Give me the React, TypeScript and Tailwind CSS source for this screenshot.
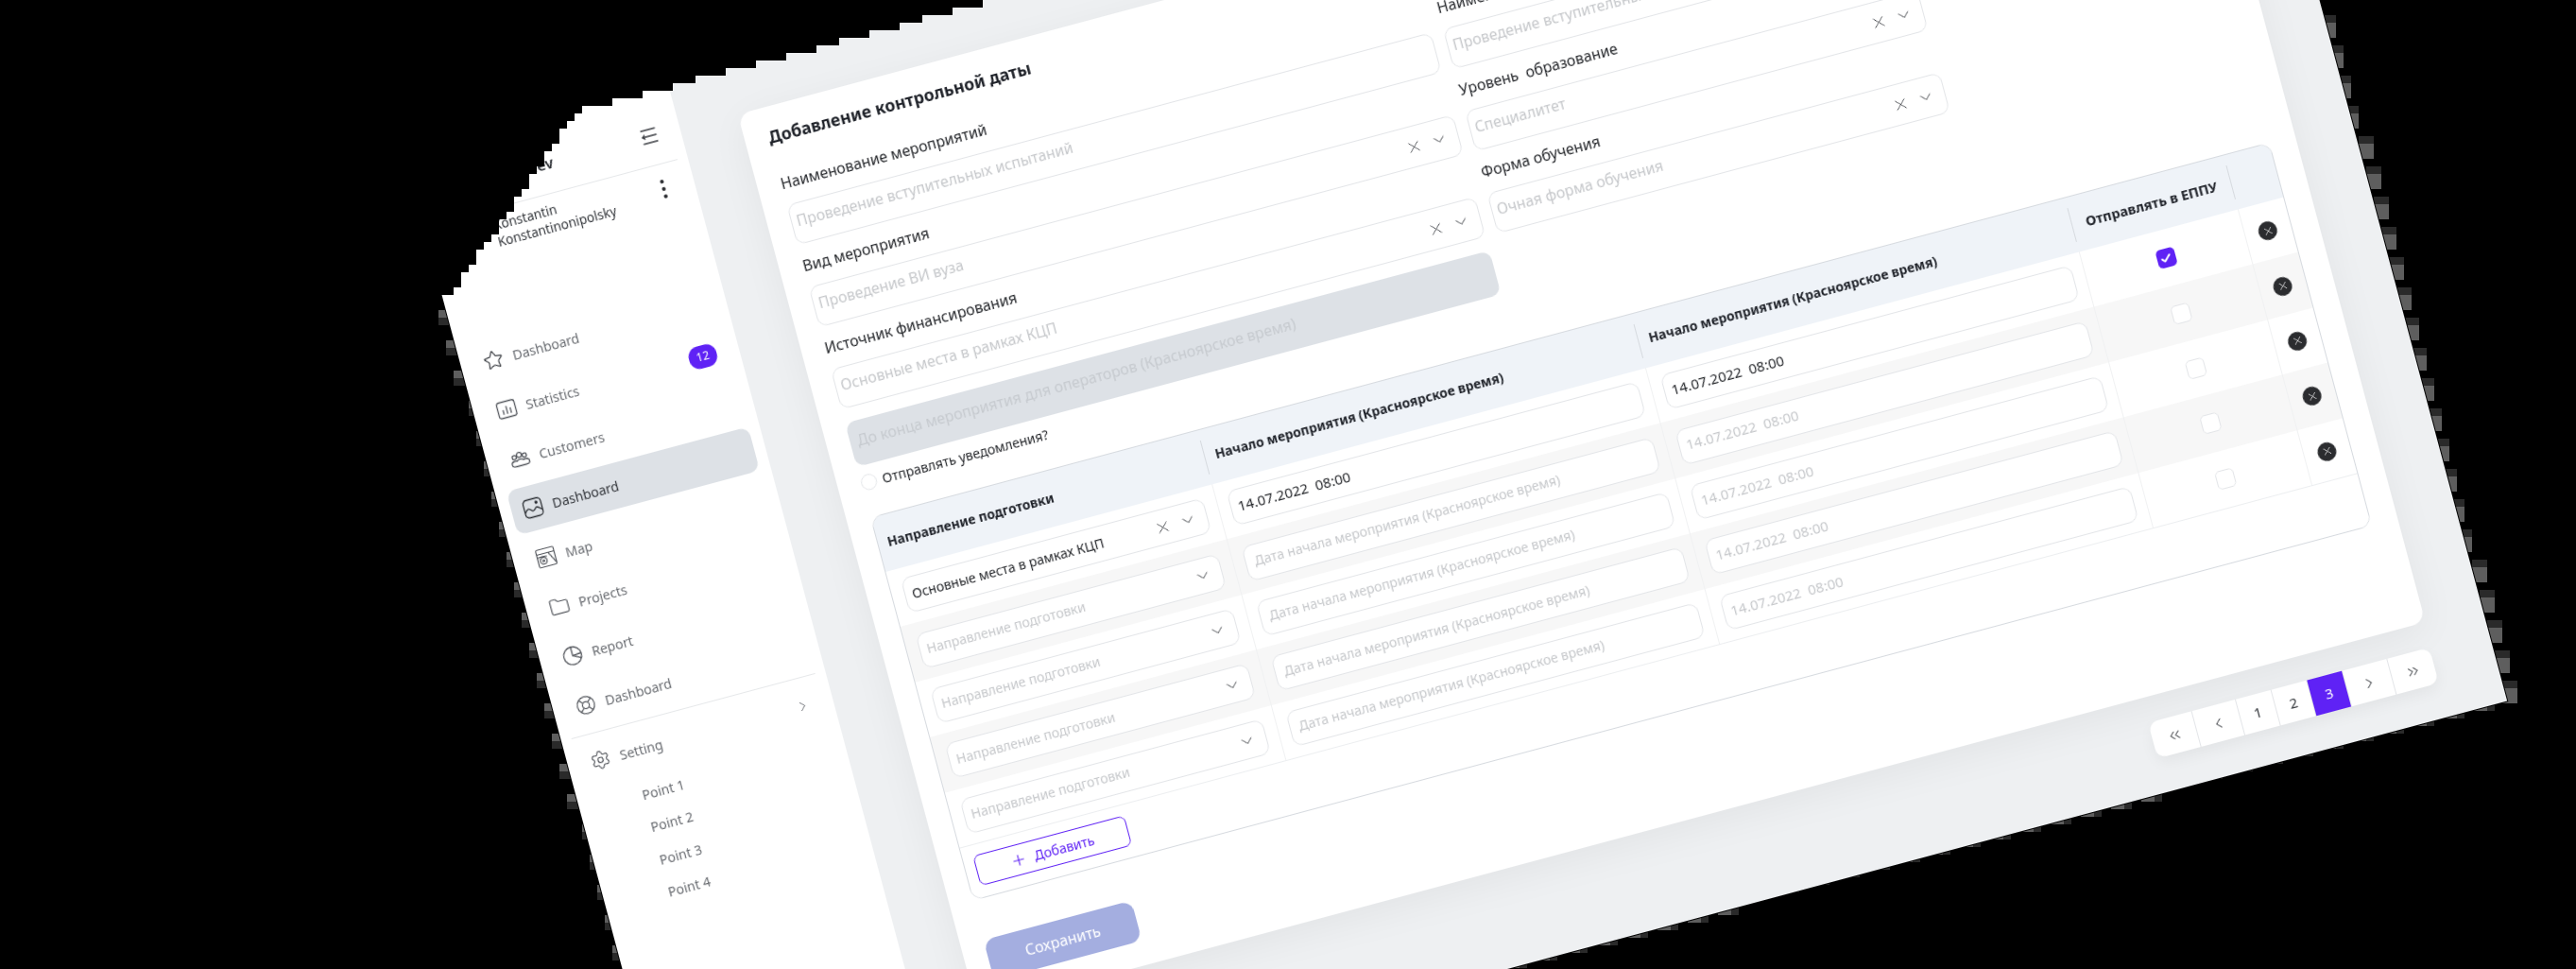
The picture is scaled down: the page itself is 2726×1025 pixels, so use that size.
import React from 'react';
import {
  X,
  ChevronDown,
  ChevronRight,
  ChevronLeft,
  ChevronsLeft,
  ChevronsRight,
  Star,
  Folder,
  LifeBuoy,
  Settings,
  Plus,
  Check,
} from 'lucide-react';

const IconStats = () => (
  <svg width="22" height="22" viewBox="0 0 22 22" fill="none" stroke="#55585e" strokeWidth="1.3" strokeLinecap="round">
    <rect x="1.5" y="2.5" width="19" height="17" rx="2.5" />
    <path d="M7 11.5v4M11 8v7.5M15 10.500v5" />
  </svg>
);

const IconUsers = () => (
  <svg width="22" height="22" viewBox="0 0 22 22" fill="none" stroke="#55585e" strokeWidth="1.3" strokeLinecap="round" strokeLinejoin="round">
    <circle cx="11" cy="7" r="2.600" />
    <circle cx="5.500" cy="8.500" r="2.200" />
    <circle cx="16.500" cy="8.500" r="2.200" />
    <path d="M6 18.500c-2.500 0-4.500-.6-4.500-2.500 0-2 1.500-3.500 4-3.500 1 0 1.500.2 2 .5 1-1 2-1.300 3.500-1.300s2.500.3 3.500 1.300c.5-.3 1-.5 2-.5 2.500 0 4 1.500 4 3.500 0 1.900-2 2.500-4.500 2.500z" />
  </svg>
);

const IconPicture = () => (
  <svg width="22" height="22" viewBox="0 0 22 22" fill="none" stroke="#2b2e33" strokeWidth="1.3" strokeLinecap="round" strokeLinejoin="round">
    <rect x="1.500" y="1.500" width="19" height="19" rx="4" />
    <path d="M2 14.500c2-3 3.500-4 5-3s2.500 3 4 2.500 2.500-3 4-3 3 2 5 3.500" />
    <circle cx="15.500" cy="6" r="1" fill="#2b2e33" />
  </svg>
);

const IconMap = () => (
  <svg width="22" height="22" viewBox="0 0 22 22" fill="none" stroke="#55585e" strokeWidth="1.2" strokeLinecap="round" strokeLinejoin="round">
    <rect x="1.500" y="1.500" width="19" height="19" rx="1.500" />
    <path d="M1.500 6.500h19M14 6.500 20.500 19M1.500 10c4-1 7-1 10 0" />
    <circle cx="7.500" cy="14" r="3.500" />
    <circle cx="7.500" cy="14" r="1" />
  </svg>
);

const IconPie = () => (
  <svg width="22" height="22" viewBox="0 0 22 22" fill="none" stroke="#55585e" strokeWidth="1.3" strokeLinecap="round" strokeLinejoin="round">
    <circle cx="11" cy="11" r="9.500" />
    <path d="M11 1.500V11l8.500 4.200M11 11l9.500-1" />
  </svg>
);

const IconCollapse = () => (
  <svg width="22" height="22" viewBox="0 0 22 22" fill="none" stroke="#3a3d42" strokeWidth="1.3" strokeLinecap="round" strokeLinejoin="round">
    <path d="M4 4h15M4 11h15M4 18h15M4 11l2.500-2M4 11l2.500 2" />
  </svg>
);

const navItems = [
  { label: 'Dashboard', icon: <Star size={22} strokeWidth={1.3} color="#3a3d42" /> },
  { label: 'Statistics', icon: <IconStats />, badge: '12' },
  { label: 'Customers', icon: <IconUsers /> },
  { label: 'Dashboard', icon: <IconPicture />, active: true },
  { label: 'Map', icon: <IconMap /> },
  { label: 'Projects', icon: <Folder size={22} strokeWidth={1.3} color="#55585e" /> },
  { label: 'Report', icon: <IconPie /> },
  { label: 'Dashboard', icon: <LifeBuoy size={22} strokeWidth={1.3} color="#55585e" /> },
];

const Sidebar = () => (
  <aside className="w-[289px] shrink-0 bg-white flex flex-col text-[#6a6d72]">
    <div className="h-[86px] pt-[24px] flex items-center">
      <span className="ml-[88px] text-[16px] font-semibold text-[#2b2e33]">Sergeev</span>
      <span className="ml-auto mr-[23px]">
        <IconCollapse />
      </span>
    </div>
    <div className="mx-[11px] border-t border-[#e6e8ea]" />
    <div className="h-[52px] flex items-center pl-[72px] pr-[31px]">
      <div className="text-[13.500px] leading-[18px] text-[#33363b]">
        <div>Konstantin</div>
        <div>Konstantinonipolsky</div>
      </div>
      <div className="ml-auto flex flex-col gap-[4px]">
        <span className="w-[4px] h-[4px] rounded-full bg-[#26282c]" />
        <span className="w-[4px] h-[4px] rounded-full bg-[#26282c]" />
        <span className="w-[4px] h-[4px] rounded-full bg-[#26282c]" />
      </div>
    </div>
    <nav className="mt-[75px] px-[12px]">
      {navItems.map((item, i) => (
        <div key={i} className="h-[54px] flex items-center">
          <div
            className={`h-[48px] w-full rounded-[10px] flex items-center gap-[10px] pl-[12px] pr-[12px] text-[14px] ${
              item.active ? 'bg-[#dde1e6] text-[#33363b]' : ''
            }`}
          >
            {item.icon}
            <span>{item.label}</span>
            {item.badge && (
              <span className="ml-auto w-[30px] h-[24px] rounded-[11px] bg-[#5f22f5] text-white text-[12px] flex items-center justify-center">
                {item.badge}
              </span>
            )}
          </div>
        </div>
      ))}
    </nav>
    <div className="mx-[11px] mt-[3px] border-t border-[#e6e8ea]" />
    <div className="h-[58px] flex items-center pl-[24px] pr-[24px] gap-[10px] text-[14px]">
      <Settings size={22} strokeWidth={1.3} color="#55585e" />
      <span>Setting</span>
      <ChevronRight size={17} strokeWidth={1.4} color="#55585e" className="ml-auto" />
    </div>
    <div className="pt-[1px] pl-[68px] text-[14px]">
      {['Point 1', 'Point 2', 'Point 3', 'Point 4'].map((p) => (
        <div key={p} className="h-[35.300px] flex items-center">
          {p}
        </div>
      ))}
    </div>
  </aside>
);

const Select = ({
  text,
  filled,
  clear,
  tall,
  textClass = 'text-[14px] pl-[6px] pb-[2px]',
}: {
  text: string;
  filled?: boolean;
  clear?: boolean;
  tall?: boolean;
  textClass?: string;
}) => (
  <div
    className={`${tall ? 'h-[44px]' : 'h-[38px]'} rounded-[10px] border border-[#e3e5e8] bg-white flex items-center pl-[1px] pr-[10px]`}
  >
    <span className={`whitespace-pre ${textClass} ${filled ? 'text-[#26282c]' : 'text-[#c6c8cb]'}`}>{text}</span>
    {clear && <X size={19} strokeWidth={1.2} color="#33363b" className="ml-auto" />}
    {clear !== undefined && (
      <ChevronDown size={20} strokeWidth={1.2} color="#33363b" className={clear ? 'ml-[8px]' : 'ml-auto'} />
    )}
  </div>
);

const Field = ({ label, text, clear }: { label: string; text: string; clear?: boolean }) => (
  <div>
    <div className="h-[22px] mb-[12px] text-[15.800px] leading-[22px] text-[#26282c] whitespace-pre">{label}</div>
    <Select text={text} clear={clear} tall textClass="text-[15.800px] pl-[4px] pb-[5px]" />
  </div>
);

const colsClass = 'grid grid-cols-[358px_475px_475px_174px_51px]';
const dateClass = 'text-[15px] pl-[6px] pb-[2px]';

const DataTable = () => (
  <div className="mt-[25px] rounded-[12px] border border-[#d6dadf] overflow-hidden">
    <div className={`${colsClass} h-[59px] bg-[#eff3f8] items-center text-[13.800px] font-bold text-[#1f2229]`}>
      <div className="h-[37px] flex items-center pl-[10px] border-r border-[#d6dadf]">Направление подготовки</div>
      <div className="h-[37px] flex items-center pl-[11px] border-r border-[#d6dadf]">Начало мероприятия (Красноярское время)</div>
      <div className="h-[37px] flex items-center pl-[11px] border-r border-[#d6dadf]">Начало мероприятия (Красноярское время)</div>
      <div className="h-[37px] flex items-center justify-center border-r border-[#d6dadf] text-[14.500px]">Отправлять в ЕППУ</div>
      <div />
    </div>
    {[0, 1, 2, 3, 4].map((i) => (
      <div key={i} className={`${colsClass} h-[60.400px] items-stretch ${i % 2 === 1 ? 'bg-[#f7f7f7]' : 'bg-white'}`}>
        <div className="pl-[13px] pr-[13px] flex flex-col justify-center border-r border-[#f0f1f2]">
          {i === 0 ? (
            <Select text="Основные места в рамках КЦП" filled clear />
          ) : (
            <Select text="Направление подготовки" clear={false} />
          )}
        </div>
        <div className="px-[12px] flex flex-col justify-center border-r border-[#f0f1f2]">
          {i === 0 ? (
            <Select text="14.07.2022  08:00" filled textClass={dateClass} />
          ) : (
            <Select text="Дата начала мероприятия (Красноярское время)" textClass="text-[14px] pl-[8px] pb-[2px]" />
          )}
        </div>
        <div className="px-[12px] flex flex-col justify-center border-r border-[#f0f1f2]">
          <Select text="14.07.2022  08:00" filled={i === 0} textClass={dateClass} />
        </div>
        <div className="flex items-center justify-center border-r border-[#f0f1f2]">
          {i === 0 ? (
            <span className="w-[20px] h-[20px] rounded-[5px] bg-[#5f22f5] flex items-center justify-center">
              <Check size={13} strokeWidth={3.5} color="#ffffff" />
            </span>
          ) : (
            <span className="w-[20px] h-[20px] rounded-[5px] border border-[#e3e5e8] bg-white" />
          )}
        </div>
        <div className="flex items-center justify-center pr-[3px]">
          <span className="w-[20px] h-[20px] rounded-full bg-[#2b2c2f] flex items-center justify-center">
            <X size={13} strokeWidth={1.5} color="#ffffff" />
          </span>
        </div>
      </div>
    ))}
    <div className="h-[57px] border-t border-[#eceef0] pl-[11px] flex items-center bg-white">
      <button className="w-[166px] h-[33px] rounded-[7px] border border-[#5f22f5] text-[#5f22f5] text-[14px] flex items-center justify-center gap-[8px]">
        <Plus size={18} strokeWidth={1.5} />
        Добавить
      </button>
    </div>
  </div>
);

const pages = [
  { w: 'w-[48px]', node: <ChevronsLeft size={18} strokeWidth={1.4} /> },
  { w: 'w-[48px]', node: <ChevronLeft size={18} strokeWidth={1.4} /> },
  { w: 'w-[39px]', node: '1' },
  { w: 'w-[39px]', node: '2' },
  { w: 'w-[39px]', node: '3', active: true },
  { w: 'w-[49px]', node: <ChevronRight size={18} strokeWidth={1.4} /> },
  { w: 'w-[46px]', node: <ChevronsRight size={18} strokeWidth={1.4} /> },
];

const Pagination = () => (
  <div className="mt-[27px] mr-[3px] self-end flex h-[39px] rounded-[10px] overflow-hidden bg-white shadow-[0_6px_16px_rgba(0,0,0,0.05)] text-[15px] text-[#33363b]">
    {pages.map((p, i) => (
      <div
        key={i}
        className={`${p.w} flex items-center justify-center border-r border-[#e3e5e8] last:border-r-0 ${
          p.active ? 'bg-[#5f22f5] text-white' : ''
        }`}
      >
        {p.node}
      </div>
    ))}
  </div>
);

const Main = () => (
  <main className="flex-1 bg-[#eef0f2] pt-[57px] pl-[63px] pr-[62px] flex flex-col">
    <section className="w-[1586px] h-[981px] shrink-0 rounded-[14px] bg-white shadow-[0_10px_40px_rgba(0,0,0,0.05)] pt-[20px] pl-[25px] pr-[28px]">
      <h1 className="text-[17.700px] leading-[24px] font-bold text-[#1f2229]">Добавление контрольной даты</h1>
      <div className="mt-[28px] grid grid-cols-[706px_496px] gap-x-[13px]">
        <div className="flex flex-col gap-[12px]">
          <Field label="Наименование мероприятий" text="Проведение вступительных испытаний" />
          <Field label="Вид мероприятия" text="Проведение ВИ вуза" clear />
          <Field label="Источник финансирования" text="Основные места в рамках КЦП" clear />
        </div>
        <div className="flex flex-col gap-[12px]">
          <Field label="Наименование мероприятий" text="Проведение вступительных испытаний" clear />
          <Field label="Уровень  образование" text="Специалитет" clear />
          <Field label="Форма обучения" text="Очная форма обучения" clear />
        </div>
      </div>
      <div className="mt-[15px] w-[706px] h-[48px] rounded-[10px] bg-[#dde1e6] flex items-center pl-[8px] pb-[4px] text-[15.800px] text-[#c6cacf]">
        До конца мероприятия для операторов (Красноярское время)
      </div>
      <label className="mt-[6px] h-[24px] flex items-center gap-[6px] text-[14px] text-[#26282c]">
        <span className="w-[17px] h-[17px] rounded-full border border-[#e3e5e8]" />
        Отправлять уведомления?
      </label>
      <DataTable />
      <button className="mt-[43px] w-[162px] h-[44px] rounded-[12px] bg-[#a4aee0] text-white text-[16px]">Сохранить</button>
    </section>
    <Pagination />
  </main>
);

// the picture's top-left is cut by a coarse 8px mask: [x, y] where each stair starts
const diagonalYs = [312, 304, 288, 280, 264, 256, 248, 232, 224, 208, 200, 184, 176, 160, 152, 136, 128, 120];
const topStairs = [
  [616, 112], [648, 104], [680, 96], [712, 88], [736, 80], [768, 72], [800, 64],
  [832, 56], [864, 48], [888, 40], [920, 32], [952, 24], [976, 16], [1008, 8], [1040, 0],
];

const buildClip = () => {
  const stairs = [...diagonalYs.map((y, k) => [472 + k * 8, y]), ...topStairs];
  const pts: string[] = ['0px 1025px', '0px 312px'];
  let prevY = 312;
  for (const [x, y] of stairs) {
    pts.push(`${x}px ${prevY}px`, `${x}px ${y}px`);
    prevY = y;
  }
  pts.push('2726px 0px', '2726px 1025px');
  return `polygon(${pts.join(',')})`;
};

// the same mask leaves grey blocks just outside the straight edges of the screen
const EdgeBlocks = () => {
  const light = '#5e5e5e';
  const dark = '#2a2a2a';
  const blocks: { x: number; y: number; w: number; h: number; fill: string }[] = [];
  for (let y = 328; y < 1025; y += 32) {
    const xe = 532 + 0.2679 * (y - 550);
    const xs = Math.round((xe - 6) / 8) * 8;
    blocks.push({ x: xs, y, w: 16, h: 8, fill: light }, { x: xs, y: y + 8, w: 16, h: 8, fill: dark });
  }
  for (let y = 16; y < 740; y += 32) {
    const xe = 2455.6 + 0.2679 * y;
    const xs = Math.round((xe + 6) / 8) * 8;
    blocks.push({ x: xs - 8, y, w: 16, h: 8, fill: dark }, { x: xs - 8, y: y + 8, w: 16, h: 16, fill: light });
  }
  for (let x = 2640; x > 1590; x -= 32) {
    const ye = 741.5 + 0.2679 * (2653 - x);
    const ys = Math.round((ye + 5) / 8) * 8 - 8;
    blocks.push({ x: x - 22, y: ys, w: 14, h: 8, fill: light }, { x: x - 8, y: ys, w: 8, h: 8, fill: dark });
  }
  return (
    <svg className="absolute inset-0" width="2726" height="1025">
      {blocks.map((b, i) => (
        <rect key={i} x={b.x} y={b.y} width={b.w} height={b.h} fill={b.fill} />
      ))}
    </svg>
  );
};

export default function App() {
  return (
    <div className="relative w-[2726px] h-[1025px] overflow-hidden bg-black font-['Noto_Sans',sans-serif]">
      <div className="absolute inset-0" style={{ clipPath: buildClip() }}>
        <EdgeBlocks />
        <div className="absolute left-[426px] top-[157px] w-[2000px] h-[1141px] origin-top-left rotate-[-15deg] flex blur-[0.4px] outline outline-black">
          <Sidebar />
          <Main />
        </div>
      </div>
    </div>
  );
}
